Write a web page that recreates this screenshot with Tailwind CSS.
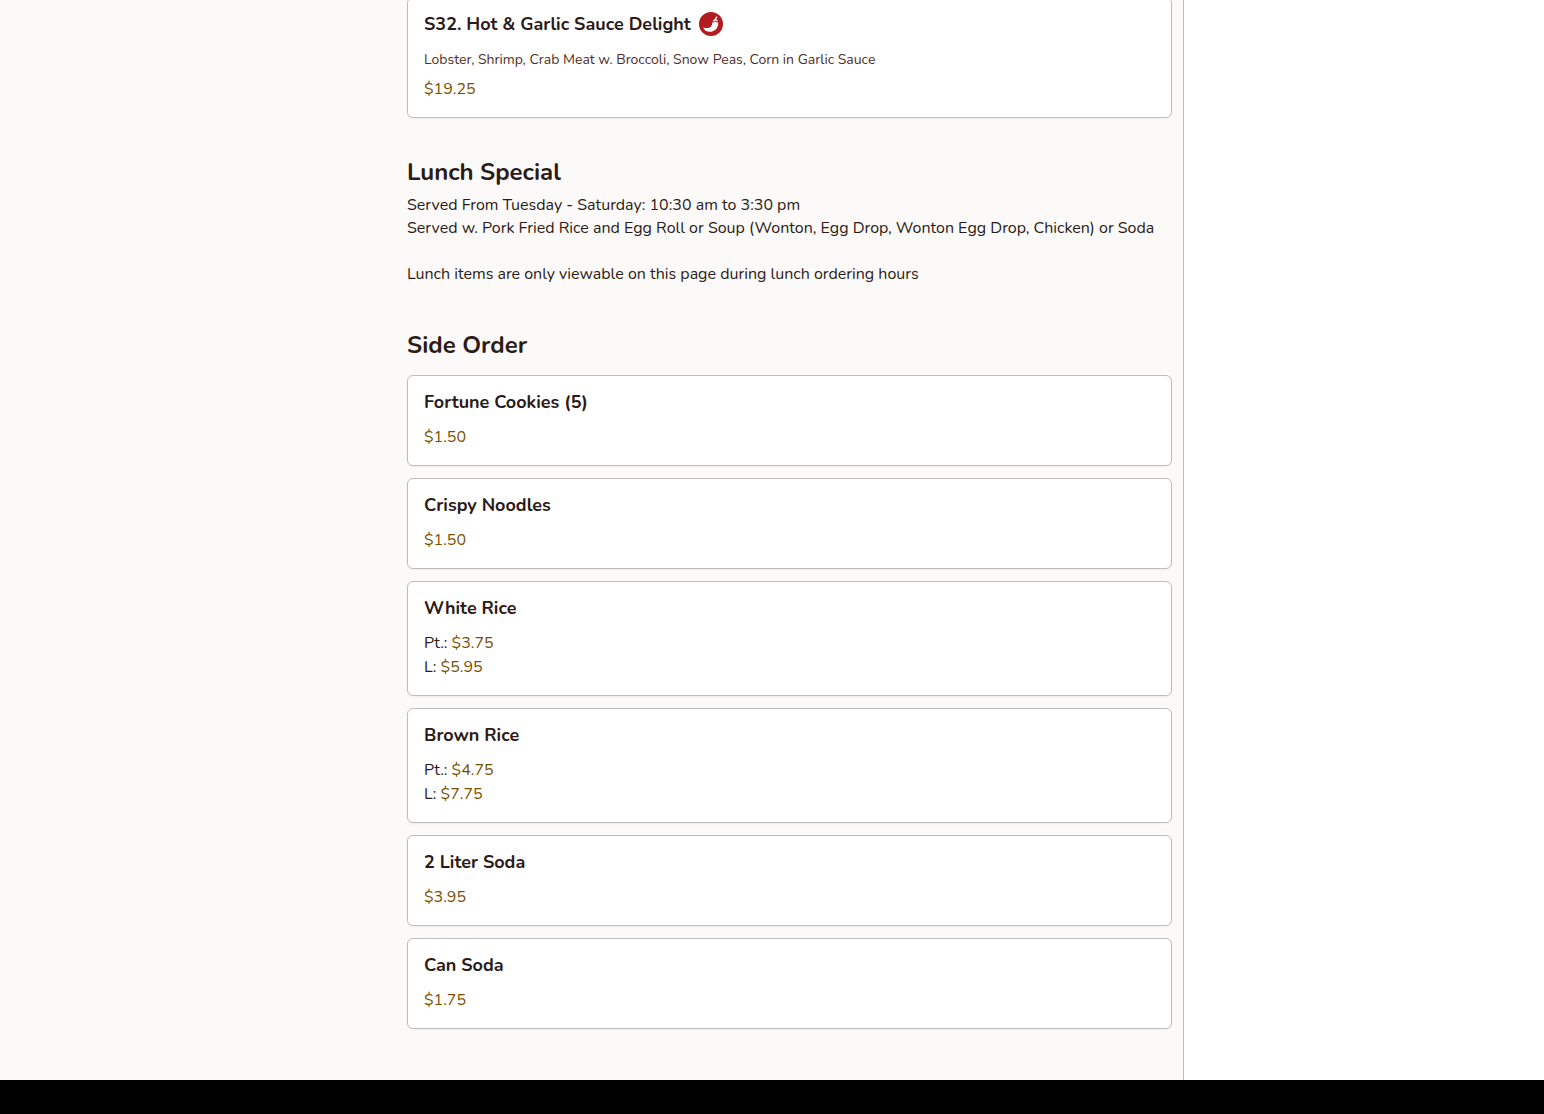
<!DOCTYPE html>
<html lang="en">

<head>
  <meta charset="UTF-8" />
  <meta name="viewport" content="width=device-width, initial-scale=1" />
  <title>Menu - Side Order</title>
  <script src="https://cdn.jsdelivr.net/npm/@tailwindcss/browser@4"></script>
</head>

<body class="min-h-screen flex flex-col bg-black text-[#2b1a17] font-[Nunito,'Open_Sans',sans-serif] overflow-x-hidden">

  <div class="flex-1 flex overflow-hidden bg-white">
    <main class="flex-1 min-w-0 bg-[#fbfaf8] border-r border-[#bdbdbd] pl-[407px] pr-[11px] pb-[51px]">

      <section>
        <ul class="-mt-[3px]">
          <li class="bg-white border border-[#bdbdbd] rounded-md shadow-xs px-4 pt-3 pb-4">
            <h3 class="flex items-center gap-2 text-lg leading-7 font-bold">
              S32. Hot &amp; Garlic Sauce Delight
              <svg class="size-6" viewBox="0 0 24 24" role="img" aria-label="Spicy">
                <circle cx="12" cy="12" r="12" fill="#b01c20" />
                <path d="M4.200 15.400C8.500 17 12.300 15.800 13 12.400c.2-1.200.4-2 1-2.700l1.200.9 1.300-1 1.200 1 1.200-.3c.4.8.4 2 .1 3-1.100 4.400-4.400 6.700-8.400 6.500-3.100-.1-5.400-1.600-6.400-4.400z" fill="#fff" />
                <path d="M13.700 8.900c.5-.9 1.300-1.500 2.200-1.600 0-1.200.6-2.300 1.800-3.100l.9 1c-.8.600-1.200 1.300-1.200 2.200.9.300 1.400.9 1.600 1.700l-1 .3-1.200-1-1.300 1z" fill="#fff" />
              </svg>
            </h3>
            <p class="mt-3 text-sm leading-5 text-[#4f2d28]">Lobster, Shrimp, Crab Meat w. Broccoli, Snow Peas, Corn in Garlic Sauce</p>
            <p class="mt-[7px] text-base leading-6 text-[#7a4f00]">$19.25</p>
          </li>
        </ul>
      </section>

      <section class="mt-9">
        <h2 class="text-2xl leading-9 font-bold">Lunch Special</h2>
        <p class="mt-1 text-base leading-[23px]">
          Served From Tuesday - Saturday: 10:30 am to 3:30 pm<br>
          Served w. Pork Fried Rice and Egg Roll or Soup (Wonton, Egg Drop, Wonton Egg Drop, Chicken) or Soda<br>
          <br>
          Lunch items are only viewable on this page during lunch ordering hours
        </p>
      </section>

      <section class="mt-[41px]">
        <h2 class="text-2xl leading-9 font-bold">Side Order</h2>
        <ul class="mt-3 space-y-3">
          <li class="bg-white border border-[#bdbdbd] rounded-md shadow-xs px-4 pt-3 pb-4">
            <h3 class="text-lg leading-7 font-bold">Fortune Cookies (5)</h3>
            <p class="mt-[9px] text-base leading-6 text-[#7a4f00]">$1.50</p>
          </li>
          <li class="bg-white border border-[#bdbdbd] rounded-md shadow-xs px-4 pt-3 pb-4">
            <h3 class="text-lg leading-7 font-bold">Crispy Noodles</h3>
            <p class="mt-[9px] text-base leading-6 text-[#7a4f00]">$1.50</p>
          </li>
          <li class="bg-white border border-[#bdbdbd] rounded-md shadow-xs px-4 pt-3 pb-4">
            <h3 class="text-lg leading-7 font-bold">White Rice</h3>
            <p class="mt-[9px] text-base leading-6">Pt.: <span class="text-[#7a4f00]">$3.75</span></p>
            <p class="text-base leading-6">L: <span class="text-[#7a4f00]">$5.95</span></p>
          </li>
          <li class="bg-white border border-[#bdbdbd] rounded-md shadow-xs px-4 pt-3 pb-4">
            <h3 class="text-lg leading-7 font-bold">Brown Rice</h3>
            <p class="mt-[9px] text-base leading-6">Pt.: <span class="text-[#7a4f00]">$4.75</span></p>
            <p class="text-base leading-6">L: <span class="text-[#7a4f00]">$7.75</span></p>
          </li>
          <li class="bg-white border border-[#bdbdbd] rounded-md shadow-xs px-4 pt-3 pb-4">
            <h3 class="text-lg leading-7 font-bold">2 Liter Soda</h3>
            <p class="mt-[9px] text-base leading-6 text-[#7a4f00]">$3.95</p>
          </li>
          <li class="bg-white border border-[#bdbdbd] rounded-md shadow-xs px-4 pt-3 pb-4">
            <h3 class="text-lg leading-7 font-bold">Can Soda</h3>
            <p class="mt-[9px] text-base leading-6 text-[#7a4f00]">$1.75</p>
          </li>
        </ul>
      </section>
    </main>

    <aside class="w-90 shrink-0 bg-white"></aside>
  </div>

  <footer class="h-[34px] bg-black"></footer>

</body>

</html>
